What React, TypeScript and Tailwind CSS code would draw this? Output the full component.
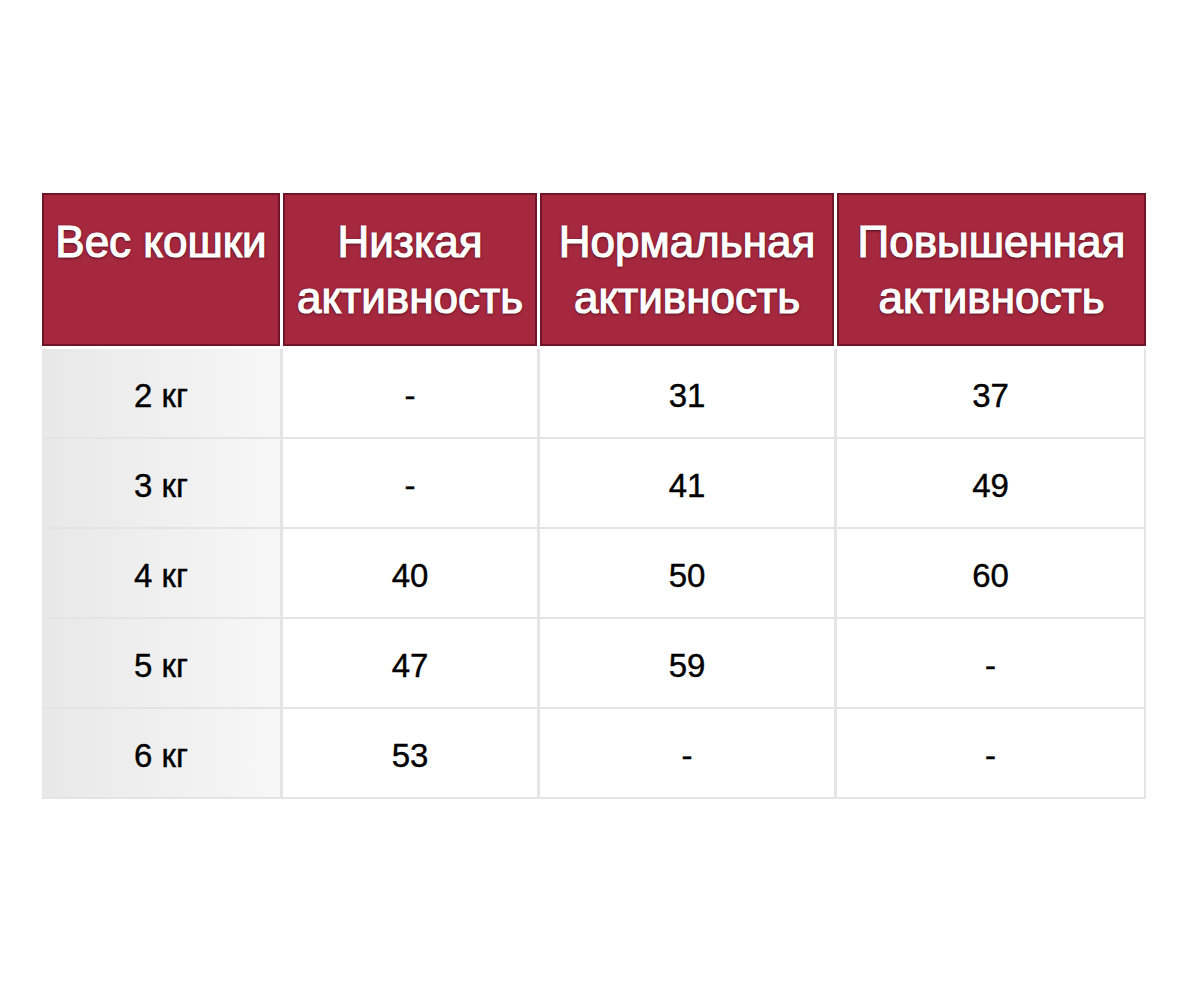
const headers = [
  ['Вес кошки'],
  ['Низкая', 'активность'],
  ['Нормальная', 'активность'],
  ['Повышенная', 'активность'],
];

const rows = [
  ['2 кг', '-', '31', '37'],
  ['3 кг', '-', '41', '49'],
  ['4 кг', '40', '50', '60'],
  ['5 кг', '47', '59', '-'],
  ['6 кг', '53', '-', '-'],
];

export default function App() {
  return (
    <div className="min-h-[1002px] w-[1200px] bg-white pl-[42px] pt-[193px]" style={{ fontFamily: '"Liberation Sans", Arial, sans-serif' }}>
      <div className="w-[1104px]">
        {/* header */}
        <div className="grid grid-cols-[238px_254px_294px_309px] gap-x-[3px]">
          {headers.map((h, i) => (
            <div
              key={i}
              className="h-[153px] border-2 border-[#6f1527] bg-[#a5283f] pt-[19px] text-center text-[44px] leading-[56px] text-white [-webkit-text-stroke:1.2px_white] [text-shadow:0_1px_3px_rgba(40,0,10,0.9)]"
            >
              {h.map((line) => (
                <div key={line}>{line}</div>
              ))}
            </div>
          ))}
        </div>

        {/* body */}
        <div className="mt-[3px] grid grid-cols-[238px_254px_294px_307px] gap-x-[3px] gap-y-[2px] bg-[#e4e4e4] pb-[2px] pr-[2px]">
          {rows.map((r, ri) =>
            r.map((v, ci) => (
              <div
                key={`${ri}-${ci}`}
                className={`flex h-[88px] items-center justify-center pt-[5px] text-[33px] text-black [-webkit-text-stroke:0.4px_black] ${
                  ci === 0 ? 'bg-gradient-to-r from-[#e8e8e8] to-[#f7f7f7]' : 'bg-white'
                }`}
              >
                {v}
              </div>
            ))
          )}
        </div>
      </div>
    </div>
  );
}
